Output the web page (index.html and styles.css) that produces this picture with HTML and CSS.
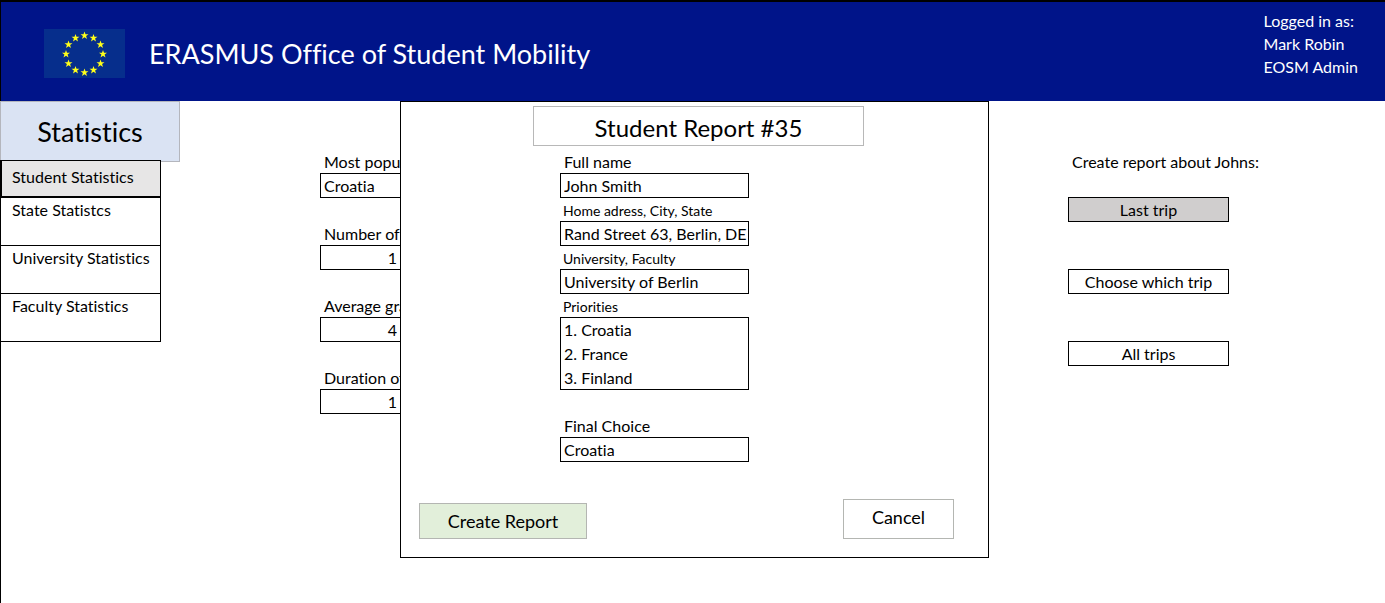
FILE: index.html
```html
<!DOCTYPE html>
<html lang="en">
<head>
<meta charset="utf-8">
<title>ERASMUS Office of Student Mobility</title>
<link rel="stylesheet" href="styles.css">
</head>
<body>
<header class="header">
  <svg class="flag" viewBox="0 0 81 49" aria-hidden="true">
    <defs><path id="star" d="M0-4 1-1.200 4-1.200 1.600.6 2.500 3.400 0 1.700-2.500 3.400-1.600.6-4-1.200-1-1.200Z"/></defs>
    <rect width="81" height="49" fill="#062e8c"/>
    <g fill="#ffff1a">
      <use href="#star" x="40.500" y="6.500"/><use href="#star" x="49.500" y="9"/>
      <use href="#star" x="56.500" y="15.500"/><use href="#star" x="59" y="25"/>
      <use href="#star" x="56.500" y="34.500"/><use href="#star" x="49.500" y="41"/>
      <use href="#star" x="40.500" y="43.500"/><use href="#star" x="31.500" y="41"/>
      <use href="#star" x="24.500" y="34.500"/><use href="#star" x="22" y="25"/>
      <use href="#star" x="24.500" y="15.500"/><use href="#star" x="31.500" y="9"/>
    </g>
  </svg>
  <h1 class="brand">ERASMUS Office of Student Mobility</h1>
  <p class="user">Logged in as:<br>Mark Robin<br>EOSM Admin</p>
</header>
<main class="main">
  <aside class="sidebar">
    <h2 class="sidebar-title">Statistics</h2>
    <nav class="menu">
      <a class="menu-item active" href="#student">Student Statistics</a>
      <a class="menu-item" href="#state">State Statistcs</a>
      <a class="menu-item" href="#university">University Statistics</a>
      <a class="menu-item" href="#faculty">Faculty Statistics</a>
    </nav>
  </aside>
  <section class="stats">
    <div class="stat"><label for="popular">Most popular</label><output id="popular" class="value">Croatia</output></div>
    <div class="stat"><label for="number">Number of</label><output id="number" class="value number">1</output></div>
    <div class="stat"><label for="average">Average grade</label><output id="average" class="value number">4</output></div>
    <div class="stat"><label for="duration">Duration of</label><output id="duration" class="value number">1</output></div>
  </section>
  <section class="actions">
    <p class="actions-title">Create report about Johns:</p>
    <button class="trip selected" type="button">Last trip</button>
    <button class="trip" type="button">Choose which trip</button>
    <button class="trip" type="button">All trips</button>
  </section>
  <form class="dialog" role="dialog" aria-labelledby="report-title">
    <h2 class="dialog-title" id="report-title">Student Report #35</h2>
    <div class="fields">
      <label class="label" for="name">Full name</label>
      <input class="field" id="name" value="John Smith">
      <label class="label small" for="address">Home adress, City, State</label>
      <input class="field" id="address" value="Rand Street 63, Berlin, DE">
      <label class="label small" for="school">University, Faculty</label>
      <input class="field" id="school" value="University of Berlin">
      <label class="label small" for="priorities">Priorities</label>
      <textarea class="field priorities" id="priorities" rows="3">1. Croatia
2. France
3. Finland</textarea>
      <label class="label" for="choice">Final Choice</label>
      <input class="field" id="choice" value="Croatia">
    </div>
    <div class="dialog-actions">
      <button class="button create" type="submit">Create Report</button>
      <button class="button cancel" type="button">Cancel</button>
    </div>
  </form>
</main>
</body>
</html>
```
FILE: styles.css
```css
* { box-sizing: border-box; }

body {
  display: flex;
  flex-direction: column;
  min-height: 100vh;
  margin: 0;
  border-top: 2px solid #000;
  background: #fff;
  color: #000;
  font: 16px/24px Lato, "Liberation Sans", sans-serif;
  font-variant-ligatures: none;
}

h1, h2, p { margin: 0; font-weight: 400; }
button, input, textarea {
  font: inherit;
  font-variant-ligatures: none;
  color: inherit;
  border-radius: 0;
}

.header {
  display: flex;
  align-items: center;
  height: 99px;
  padding: 0 27px 0 43px;
  border-left: 1px solid #000;
  background: #001489;
  color: #fff;
}
.flag { width: 81px; height: 49px; margin-top: 4px; }
.brand { margin: 4px 0 0 24px; font-size: 27px; line-height: 32px; }
.user { align-self: flex-start; margin-left: auto; padding-top: 7px; line-height: 23px; }

.main {
  position: relative;
  display: flex;
  flex: 1;
  border-left: 1px solid #000;
}

.sidebar { width: 180px; margin-left: -1px; }
.sidebar-title {
  height: 61px;
  border: 1px solid #b4b6bd;
  background: #dae3f3;
  font-size: 27px;
  line-height: 60px;
  text-align: center;
}
.menu {
  position: relative;
  width: 161px;
  margin-top: -2px;
  border: 1px solid #000;
  border-bottom: 0;
  background: #fff;
}
.menu-item {
  display: block;
  height: 48px;
  padding: 0 0 0 11px;
  border-bottom: 1px solid #000;
  color: inherit;
  text-decoration: none;
  white-space: nowrap;
}
.menu-item.active {
  height: 37px;
  padding: 4px 0 0 10px;
  border-bottom-width: 2px;
  border-left: 1px solid #000;
  background: #e7e6e6;
}

.stats {
  display: flex;
  flex-direction: column;
  gap: 22px;
  width: 100px;
  margin: 49px 0 0 140px;
}
.stat label { display: block; height: 23px; padding-left: 4px; white-space: nowrap; }
.stat { height: 50px; }
.value {
  display: block;
  height: 25px;
  padding: 0 3px;
  border: 1px solid #000;
}
.number { padding-right: 22px; text-align: right; }

.actions { width: 200px; margin: 49px 117px 0 auto; }
.actions-title { margin-bottom: 23px; padding-left: 4px; white-space: nowrap; }
.trip {
  display: block;
  width: 161px;
  height: 25px;
  margin-bottom: 47px;
  padding: 0;
  border: 1px solid #000;
  background: #fff;
}
.trip.selected { background: #d0cece; }

.dialog {
  position: absolute;
  top: 0;
  left: 399px;
  width: 589px;
  padding: 4px 34px 18px 18px;
  border: 1px solid #000;
  background: #fff;
}
.dialog-title {
  width: 331px;
  height: 40px;
  margin-left: 114px;
  border: 1px solid #b8b8b8;
  font-size: 24px;
  line-height: 42px;
  text-align: center;
}
.fields { display: flex; flex-direction: column; width: 189px; margin: 4px 0 0 141px; }
.label { height: 23px; padding-left: 4px; line-height: 24px; }
.label.small { padding-left: 3px; font-size: 14px; line-height: 26px; }
.field {
  height: 25px;
  padding: 0 0 0 3px;
  border: 1px solid #000;
  background: #fff;
  line-height: 24px;
}
.priorities { height: 73px; margin-bottom: 24px; resize: none; overflow: hidden; }
.dialog-actions {
  display: flex;
  align-items: flex-end;
  justify-content: space-between;
  margin-top: 37px;
}
.button { border: 1px solid #b4b6b2; font-size: 18px; line-height: 24px; }
.create { width: 168px; height: 36px; padding: 0; background: #e2efda; }
.cancel { width: 111px; height: 40px; padding: 0 0 4px; background: #fff; }
```
